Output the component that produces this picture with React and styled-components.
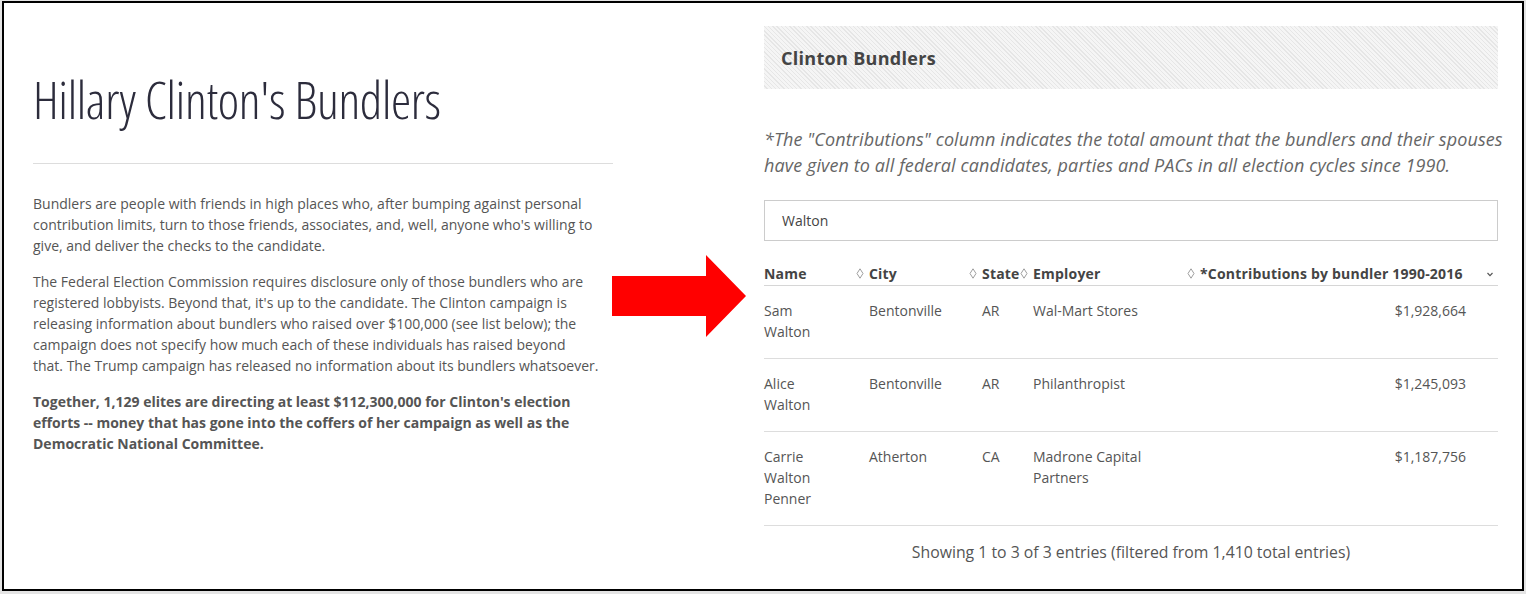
import React from "react";
import styled, { createGlobalStyle } from "styled-components";

const GlobalStyle = createGlobalStyle`
  html, body {
    margin: 0;
    padding: 0;
    background: #e4e4e4;
  }
  body {
    font-family: "Open Sans", "Noto Sans", sans-serif;
  }
`;

export const Frame = styled.div`
  box-sizing: border-box;
  margin: 1px 0 0 2px;
  width: 1522px;
  height: 590px;
  border: 2px solid #000;
  background: #fff;
  overflow: hidden;
`;

export const Layout = styled.div`
  display: flex;
  padding: 23px 0 0 29px;
`;

export const LeftCol = styled.div`
  width: 582px;
  flex-shrink: 0;
`;

export const Title = styled.h1`
  margin: 42px 0 0;
  font-family: "Open Sans", "Noto Sans", sans-serif;
  font-weight: 300;
  font-stretch: 75%;
  font-size: 51px;
  line-height: 62px;
  letter-spacing: -0.3px;
  color: #2c2c3c;
`;

export const Rule = styled.hr`
  margin: 33px 0 29px;
  width: 580px;
  border: none;
  border-top: 1px solid #dddddd;
`;

export const Para = styled.p`
  margin: 0 0 15px;
  font-size: 14px;
  line-height: 21px;
  color: #555;
  font-weight: ${(p) => (p.$bold ? 700 : 400)};
`;

export const ArrowCol = styled.div`
  width: 151px;
  flex-shrink: 0;
  padding-top: 229px;
  margin-left: -3px;
`;

export const RightCol = styled.div`
  width: 734px;
  flex-shrink: 0;
  margin-left: 1px;
`;

export const Banner = styled.div`
  height: 63px;
  display: flex;
  align-items: center;
  padding-left: 17px;
  background: repeating-linear-gradient(
    45deg,
    #f5f5f5 0px,
    #f5f5f5 2px,
    #e6e6e6 2px,
    #e6e6e6 3px
  );
`;

export const BannerTitle = styled.h2`
  margin: 0;
  font-size: 18px;
  font-weight: 700;
  color: #444;
  letter-spacing: 0.3px;
`;

export const Note = styled.p`
  margin: 37px -10px 22px 0;
  font-style: italic;
  font-size: 18px;
  line-height: 26px;
  color: #666;
  letter-spacing: 0.1px;
  white-space: nowrap;
`;

export const Search = styled.div`
  box-sizing: border-box;
  height: 41px;
  border: 1px solid #cccccc;
  display: flex;
  align-items: center;
  padding-left: 17px;
  font-size: 14px;
  color: #444;
`;

export const Table = styled.table`
  margin-top: 22px;
  width: 734px;
  table-layout: fixed;
  border-collapse: collapse;
  font-size: 14px;
  line-height: 21px;
  color: #555;
`;

export const Th = styled.th`
  position: relative;
  width: ${(p) => p.$w}px;
  padding: 0 0 1px;
  text-align: left;
  font-weight: 700;
  color: #444;
  letter-spacing: 0.2px;
  border-bottom: 1px solid #d6d6d6;
  white-space: nowrap;
`;

export const SortMark = styled.span`
  position: absolute;
  right: ${(p) => p.$right}px;
  top: 5px;
  display: flex;
`;

export const Tr = styled.tr`
  border-bottom: 1px solid #dddddd;
`;

export const Td = styled.td`
  vertical-align: top;
  padding: 14px ${(p) => p.$pr || 0}px 16px 0;
  text-align: ${(p) => (p.$right ? "right" : "left")};
`;

export const Footer = styled.div`
  margin-top: 15px;
  text-align: center;
  font-size: 15.8px;
  line-height: 22px;
  color: #555;
`;

const SortBoth = () => (
  <svg width="8" height="11" viewBox="0 0 8 11">
    <path d="M4 0.8 L7 5.5 L4 10.2 L1 5.5 Z" fill="none" stroke="#9e9e9e" strokeWidth="1" strokeLinejoin="round" />
  </svg>
);

const SortDesc = () => (
  <svg width="8" height="11" viewBox="0 0 8 11">
    <path d="M1.5 5 L4 7.6 L6.5 5" fill="none" stroke="#555" strokeWidth="1.2" />
  </svg>
);

const RedArrow = () => (
  <svg width="134" height="82" viewBox="0 0 134 82">
    <polygon points="0,21 94,21 94,0 134,41 94,82 94,61 0,61" fill="#ff0000" />
  </svg>
);

const columns = [
  { label: "Name", w: 105 },
  { label: "City", w: 113 },
  { label: "State", w: 51 },
  { label: "Employer", w: 167 },
  { label: "*Contributions by bundler 1990-2016", w: 298, desc: true },
];

const rows = [
  { name: "Sam Walton", city: "Bentonville", state: "AR", employer: "Wal-Mart Stores", amount: "$1,928,664" },
  { name: "Alice Walton", city: "Bentonville", state: "AR", employer: "Philanthropist", amount: "$1,245,093" },
  { name: "Carrie Walton Penner", city: "Atherton", state: "CA", employer: "Madrone Capital Partners", amount: "$1,187,756" },
];

export default function App() {
  return (
    <>
      <GlobalStyle />
      <Frame>
        <Layout>
          <LeftCol>
            <Title>Hillary Clinton's Bundlers</Title>
            <Rule />
            <Para>
              Bundlers are people with friends in high places who, after bumping against personal
              contribution limits, turn to those friends, associates, and, well, anyone who's willing to
              give, and deliver the checks to the candidate.
            </Para>
            <Para>
              The Federal Election Commission requires disclosure only of those bundlers who are
              registered lobbyists. Beyond that, it's up to the candidate. The Clinton campaign is
              releasing information about bundlers who raised over $100,000 (see list below); the
              campaign does not specify how much each of these individuals has raised beyond
              <br />
              that. The Trump campaign has released no information about its bundlers whatsoever.
            </Para>
            <Para $bold>
              Together, 1,129 elites are directing at least $112,300,000 for Clinton's election
              efforts -- money that has gone into the coffers of her campaign as well as the
              Democratic National Committee.
            </Para>
          </LeftCol>

          <ArrowCol>
            <RedArrow />
          </ArrowCol>

          <RightCol>
            <Banner>
              <BannerTitle>Clinton Bundlers</BannerTitle>
            </Banner>
            <Note>
              *The "Contributions" column indicates the total amount that the bundlers and their spouses
              <br />
              have given to all federal candidates, parties and PACs in all election cycles since 1990.
            </Note>
            <Search>Walton</Search>
            <Table>
              <thead>
                <tr>
                  {columns.map((c) => (
                    <Th key={c.label} $w={c.w}>
                      {c.label}
                      <SortMark $right={c.desc ? 4 : 5}>
                        {c.desc ? <SortDesc /> : <SortBoth />}
                      </SortMark>
                    </Th>
                  ))}
                </tr>
              </thead>
              <tbody>
                {rows.map((r) => (
                  <Tr key={r.name}>
                    <Td $pr={45}>{r.name}</Td>
                    <Td $pr={10}>{r.city}</Td>
                    <Td>{r.state}</Td>
                    <Td $pr={30}>{r.employer}</Td>
                    <Td $right $pr={32}>{r.amount}</Td>
                  </Tr>
                ))}
              </tbody>
            </Table>
            <Footer>Showing 1 to 3 of 3 entries (filtered from 1,410 total entries)</Footer>
          </RightCol>
        </Layout>
      </Frame>
    </>
  );
}
